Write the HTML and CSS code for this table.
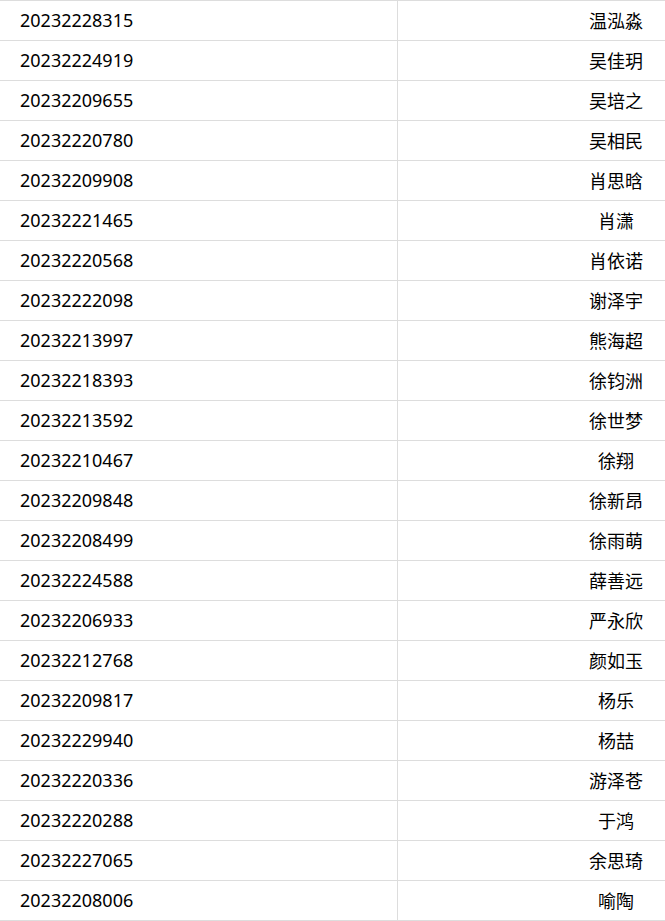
FILE: index.html
```html
<!DOCTYPE html>
<html lang="zh">
<head>
<meta charset="utf-8">
<title>名单</title>
<link rel="stylesheet" href="styles.css">
</head>
<body>
<div class="table">
  <div class="row"><div class="id">20232228315</div><div class="name">温泓淼</div></div>
  <div class="row"><div class="id">20232224919</div><div class="name">吴佳玥</div></div>
  <div class="row"><div class="id">20232209655</div><div class="name">吴培之</div></div>
  <div class="row"><div class="id">20232220780</div><div class="name">吴相民</div></div>
  <div class="row"><div class="id">20232209908</div><div class="name">肖思晗</div></div>
  <div class="row"><div class="id">20232221465</div><div class="name">肖潇</div></div>
  <div class="row"><div class="id">20232220568</div><div class="name">肖依诺</div></div>
  <div class="row"><div class="id">20232222098</div><div class="name">谢泽宇</div></div>
  <div class="row"><div class="id">20232213997</div><div class="name">熊海超</div></div>
  <div class="row"><div class="id">20232218393</div><div class="name">徐钧洲</div></div>
  <div class="row"><div class="id">20232213592</div><div class="name">徐世梦</div></div>
  <div class="row"><div class="id">20232210467</div><div class="name">徐翔</div></div>
  <div class="row"><div class="id">20232209848</div><div class="name">徐新昂</div></div>
  <div class="row"><div class="id">20232208499</div><div class="name">徐雨萌</div></div>
  <div class="row"><div class="id">20232224588</div><div class="name">薛善远</div></div>
  <div class="row"><div class="id">20232206933</div><div class="name">严永欣</div></div>
  <div class="row"><div class="id">20232212768</div><div class="name">颜如玉</div></div>
  <div class="row"><div class="id">20232209817</div><div class="name">杨乐</div></div>
  <div class="row"><div class="id">20232229940</div><div class="name">杨喆</div></div>
  <div class="row"><div class="id">20232220336</div><div class="name">游泽苍</div></div>
  <div class="row"><div class="id">20232220288</div><div class="name">于鸿</div></div>
  <div class="row"><div class="id">20232227065</div><div class="name">余思琦</div></div>
  <div class="row"><div class="id">20232208006</div><div class="name">喻陶</div></div>
</div>
</body>
</html>
```
FILE: styles.css
```css
html, body {
  margin: 0;
  padding: 0;
  background: #fff;
  overflow: hidden;
}
.table {
  font-family: "Noto Sans", "Noto Sans CJK SC", sans-serif;
  font-size: 18px;
  color: #000;
  border-bottom: 1px solid #dddddd;
}
.row {
  display: grid;
  grid-template-columns: 398px 1fr;
  height: 39px;
  border-top: 1px solid #dddddd;
}
.id {
  display: flex;
  align-items: center;
  padding-left: 20px;
  padding-bottom: 2px;
  border-right: 1px solid #dddddd;
}
.name {
  display: flex;
  align-items: center;
  justify-content: center;
  padding-left: 169px;
  padding-bottom: 2px;
}
```
